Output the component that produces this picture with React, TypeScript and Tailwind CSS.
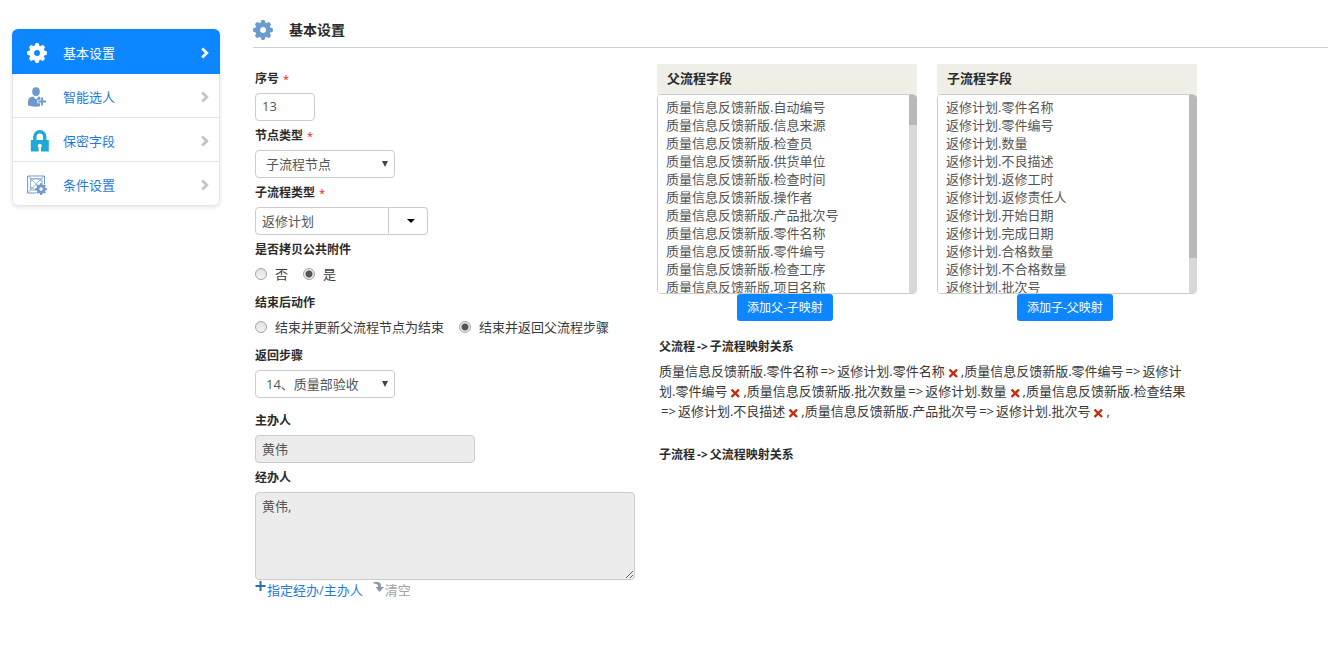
import { Fragment, useState, type ReactNode } from "react";

const parentFields = ["自动编号", "信息来源", "检查员", "供货单位", "检查时间", "操作者", "产品批次号", "零件名称", "零件编号", "检查工序", "项目名称"];
const childFields = ["零件名称", "零件编号", "数量", "不良描述", "返修工时", "返修责任人", "开始日期", "完成日期", "合格数量", "不合格数量", "批次号"];
const PARENT = "质量信息反馈新版";
const CHILD = "返修计划";
const mappings: [string, string][] = [
  ["零件名称", "零件名称"],
  ["零件编号", "零件编号"],
  ["批次数量", "数量"],
  ["检查结果", "不良描述"],
  ["产品批次号", "批次号"],
];

function Gear({ className }: { className: string }) {
  return (
    <svg viewBox="0 0 20 20" className={className} aria-hidden="true">
      <circle cx="10" cy="10" r="5.4" fill="none" stroke="currentColor" strokeWidth="4.8" />
      {[0, 45, 90, 135, 180, 225, 270, 315].map((a) => (
        <path key={a} d="M7.6 3.4 L8.1 0.9 Q8.3 0.1 9.1 0.1 H10.9 Q11.7 0.1 11.9 0.9 L12.4 3.4 Z" fill="currentColor" transform={`rotate(${a} 10 10)`} />
      ))}
    </svg>
  );
}

function UserPlus() {
  return (
    <svg viewBox="0 0 20 20" className="size-5 text-[#6f98cc]" aria-hidden="true">
      <ellipse cx="9" cy="4.6" rx="3.8" ry="4.4" fill="currentColor" />
      <path d="M1 18.6 V14.5 Q1 10.8 4.5 10 L6.2 9.4 L9 12.4 L11.8 9.4 L13.4 10 V12.7 H10.4 V16.3 H13 V19.2 Q7 20.4 1 18.6 Z" fill="currentColor" />
      <path d="M15.1 10.6 V18.4 M11.2 14.5 H19" stroke="currentColor" strokeWidth="1.9" />
    </svg>
  );
}

function Lock() {
  return (
    <svg viewBox="0 0 20 22" className="ml-[3px] h-[22px] w-5 text-[#1fa9d8]" aria-hidden="true">
      <path d="M4.8 10.5 V7 A5 5.3 0 0 1 14.8 7 V10.5" fill="none" stroke="currentColor" strokeWidth="3.4" />
      <path d="M0.8 10 H18.8 V21.6 H11 V17.4 A2 2 0 1 0 8.6 17.4 V21.6 H0.8 Z" fill="currentColor" />
    </svg>
  );
}

function GridGear() {
  return (
    <svg viewBox="0 0 20 20" className="size-5 text-[#6f98cc]" aria-hidden="true">
      <path d="M17.5 9 V1 H0.6 V18 H9" fill="none" stroke="currentColor" strokeWidth="1" />
      <path d="M3.5 3.5 H15 V9 M3.5 3.5 V15 H9 M1 1 L10 10 M17 1 L1 17.5 M3.5 6.5 Q9 1 15 6.5 M3.5 12 L9 15" fill="none" stroke="currentColor" strokeWidth="0.7" />
      <g transform="translate(8.2 8.2) scale(0.59)">
        <circle cx="10" cy="10" r="5.4" fill="white" stroke="currentColor" strokeWidth="4.6" />
        {[0, 45, 90, 135, 180, 225, 270, 315].map((a) => (
          <path key={a} d="M7.8 3.2 L8.4 0.2 H11.6 L12.2 3.2 Z" fill="currentColor" transform={`rotate(${a} 10 10)`} />
        ))}
      </g>
    </svg>
  );
}

function Chevron({ className }: { className: string }) {
  return (
    <svg viewBox="0 0 10 12" className={className} aria-hidden="true">
      <path d="M2.2 1.6 L6.8 6 L2.2 10.4" fill="none" stroke="currentColor" strokeWidth="2.8" />
    </svg>
  );
}

function Arrow({ children }: { children: ReactNode }) {
  return <span className="mx-0.5">{children}</span>;
}

function Field({ label, htmlFor, required, className = "", children }: { label: string; htmlFor: string; required?: boolean; className?: string; children: ReactNode }) {
  return (
    <div className={`flex flex-col items-start gap-1 ${className}`}>
      <label htmlFor={htmlFor} className="text-xs leading-5 font-bold text-[#2b2b2b]">
        {label}
        {required && <span className="ml-1 text-[11px] font-normal text-[#e02222]">*</span>}
      </label>
      {children}
    </div>
  );
}

function RadioGroup({ label, name, options, initial }: { label: string; name: string; options: string[]; initial: number }) {
  const [value, setValue] = useState(initial);
  return (
    <fieldset className="pb-1">
      <legend className="mb-1 text-xs leading-5 font-bold text-[#2b2b2b]">{label}</legend>
      <div className="flex gap-[15px]">
        {options.map((o, i) => (
          <label key={o} className="flex items-center gap-2 leading-5">
            <input
              type="radio"
              name={name}
              checked={value === i}
              onChange={() => setValue(i)}
              className="size-3 appearance-none rounded-full border border-[#a3a3a3] bg-linear-to-b from-[#e2e2e2] to-[#f4f4f4] checked:bg-[radial-gradient(circle,#555_0_3px,#ececec_4px)]"
            />
            {o}
          </label>
        ))}
      </div>
    </fieldset>
  );
}

function Dropdown({ id, value }: { id: string; value: string }) {
  return (
    <div className="relative w-[140px]">
      <select id={id} className="block h-7 w-full appearance-none rounded-[4px] border border-[#ccc] bg-white pr-6 pl-2.5 text-[#555]">
        <option>{value}</option>
      </select>
      <svg viewBox="0 0 8 8" className="pointer-events-none absolute top-2.5 right-1.5 size-2 text-[#444]" aria-hidden="true">
        <path d="M1 1 H7 L4 7 Z" fill="currentColor" />
      </svg>
    </div>
  );
}

function FieldList({ id, title, prefix, fields, action, thumb }: { id: string; title: string; prefix: string; fields: string[]; action: string; thumb: string }) {
  return (
    <div className="w-[260px]">
      <label htmlFor={id} className="block h-[30px] bg-[#efefe8] px-2.5 leading-[29px] font-bold text-[#2b2b2b]">
        {title}
      </label>
      <div className="relative">
        <select id={id} multiple className="block h-[200px] w-full rounded-[4px] border border-[#ccc] bg-white px-1.5 pt-0.5 text-[#555] [scrollbar-width:none]">
          {fields.map((f) => (
            <option key={f} className="h-[18px] px-0.5 py-0 leading-[17px]">
              {prefix}.{f}
            </option>
          ))}
        </select>
        <div className="pointer-events-none absolute inset-y-px right-0 w-2 overflow-hidden rounded-r-[4px] bg-[#d8d8d8]">
          <div className={`bg-[#b9b9b9] ${thumb}`} />
        </div>
      </div>
      <button type="button" className="ml-20 block rounded-[3px] bg-[#0d87ff] px-2.5 text-xs leading-[27px] text-white">
        {action}
      </button>
    </div>
  );
}

const nav = [
  { text: "基本设置", icon: <Gear className="size-5 text-white" />, active: true },
  { text: "智能选人", icon: <UserPlus />, active: false },
  { text: "保密字段", icon: <Lock />, active: false },
  { text: "条件设置", icon: <GridGear />, active: false },
];

export default function App() {
  return (
    <div className="flex items-start bg-white pl-3 font-['Open_Sans','Noto_Sans_CJK_SC',sans-serif] text-[13px] leading-5 text-[#393939]">
      <nav className="mt-[29px] w-52 shrink-0 overflow-hidden rounded-md shadow-[0_1px_4px_rgba(0,0,0,0.12)]">
        {nav.map((n) => (
          <a
            key={n.text}
            href="#"
            className={
              n.active
                ? "flex h-[45px] items-center bg-[#0d87ff] pt-0.5 pr-2.5 pl-[15px] text-white"
                : "flex h-11 items-center border-x border-b border-[#e1e4e8] pt-0.5 pr-[9px] pl-3.5 text-[#1f7ae0] last:rounded-b-md"
            }
          >
            <span className="flex w-9 items-center">{n.icon}</span>
            <span className="flex-1">{n.text}</span>
            <Chevron className={n.active ? "h-3 w-2.5 text-white" : "h-3 w-2.5 text-[#c4c4c4]"} />
          </a>
        ))}
      </nav>

      <main className="ml-[33px] min-w-0 flex-1">
        <h1 className="flex h-12 items-end gap-4 border-b border-[#ccd0d4] pb-[7px] text-sm leading-5 font-bold text-[#2b2b2b]">
          <Gear className="size-5 text-[#6a9bd2]" />
          基本设置
        </h1>

        <div className="flex items-start gap-[22px] pt-4 pl-0.5">
          <form className="flex w-[380px] shrink-0 flex-col gap-[5px] pt-[5px]">
            <Field label="序号" htmlFor="seq" required>
              <input id="seq" defaultValue="13" className="h-7 w-[60px] rounded-[4px] border border-[#ccc] px-1.5 pb-0.5 text-[#555]" />
            </Field>
            <Field label="节点类型" htmlFor="nodeType" required>
              <Dropdown id="nodeType" value="子流程节点" />
            </Field>
            <Field label="子流程类型" htmlFor="subType" required>
              <div className="flex">
                <input id="subType" defaultValue="返修计划" className="h-7 w-[134px] rounded-l-[4px] border border-[#ccc] px-1.5 pb-0.5 text-[#555]" />
                <button type="button" aria-label="选择子流程类型" className="flex h-7 w-[39px] items-center justify-center rounded-r-[4px] border border-l-0 border-[#ccc] pl-1.5">
                  <svg viewBox="0 0 8 4" className="h-1 w-2 text-black" aria-hidden="true">
                    <path d="M0 0 H8 L4 4 Z" fill="currentColor" />
                  </svg>
                </button>
              </div>
            </Field>
            <RadioGroup label="是否拷贝公共附件" name="copy" options={["否", "是"]} initial={1} />
            <RadioGroup label="结束后动作" name="after" options={["结束并更新父流程节点为结束", "结束并返回父流程步骤"]} initial={1} />
            <Field label="返回步骤" htmlFor="back" className="pb-2">
              <Dropdown id="back" value="14、质量部验收" />
            </Field>
            <Field label="主办人" htmlFor="host">
              <input id="host" readOnly defaultValue="黄伟" className="h-7 w-[220px] rounded-[4px] border border-[#ccc] bg-[#ececec] px-1.5 pb-0.5 text-[#555]" />
            </Field>
            <Field label="经办人" htmlFor="agents">
              <textarea id="agents" readOnly defaultValue="黄伟," className="block h-[88px] w-full rounded-[4px] border border-[#ccc] bg-[#ececec] px-1.5 py-[3px] text-[#555]" />
            </Field>
            <div className="-mt-[5px] flex gap-2.5">
              <a href="#" className="flex items-start text-[#1f7ae0]">
                <svg viewBox="0 0 12 12" className="size-3" aria-hidden="true">
                  <path d="M5.5 1 V11 M0.5 6 H10.5" stroke="#2a6fb0" strokeWidth="2" />
                </svg>
                指定经办/主办人
              </a>
              <a href="#" className="flex items-start text-[#9aa3ae]">
                <svg viewBox="0 0 12 12" className="mt-px size-3" aria-hidden="true">
                  <path d="M0.5 1 H4 Q8 1 8 5 V6 H11 L6.5 11 L2.5 6 H5 V5 Q5 3 0.5 2.6 Z" fill="#8a98a8" />
                </svg>
                清空
              </a>
            </div>
          </form>

          <section className="w-[540px] shrink-0">
            <div className="flex gap-5">
              <FieldList id="parentFields" title="父流程字段" prefix={PARENT} fields={parentFields} action="添加父-子映射" thumb="h-[30px]" />
              <FieldList id="childFields" title="子流程字段" prefix={CHILD} fields={childFields} action="添加子-父映射" thumb="h-[163px]" />
            </div>
            <div className="mt-4 pr-2.5 pl-0.5">
              <h2 className="text-xs leading-5 font-bold text-[#2b2b2b]">
                父流程<Arrow>-&gt;</Arrow>子流程映射关系
              </h2>
              <p className="mt-1 leading-5">
                {mappings.map(([a, b]) => (
                  <Fragment key={a}>
                    {PARENT}.{a}
                    <Arrow>=&gt;</Arrow>
                    {CHILD}.{b}
                    <button type="button" aria-label="删除" className="inline-block h-3 w-4 align-middle">
                      <svg viewBox="0 0 16 12" className="h-3 w-4" aria-hidden="true">
                        <path d="M4.5 2.5 L12 10 M12 2.5 L4.5 10" stroke="#c62a0c" strokeWidth="2.4" />
                      </svg>
                    </button>
                    ,
                  </Fragment>
                ))}
              </p>
              <h2 className="mt-6 text-xs leading-5 font-bold text-[#2b2b2b]">
                子流程<Arrow>-&gt;</Arrow>父流程映射关系
              </h2>
            </div>
          </section>
        </div>
      </main>
    </div>
  );
}
